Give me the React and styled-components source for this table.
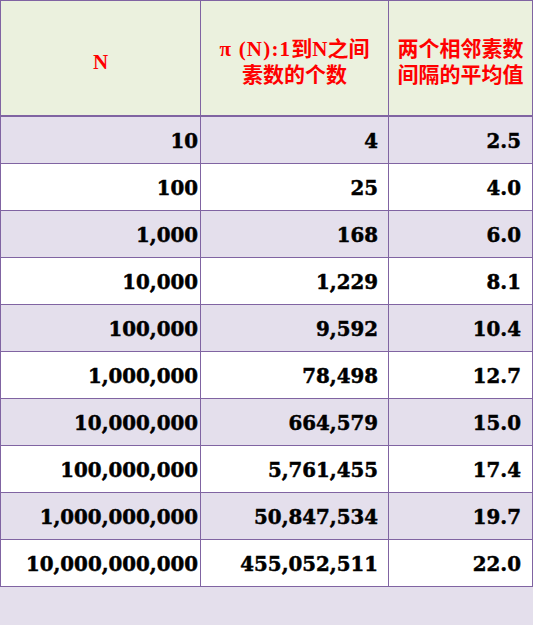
import React from "react";
import styled, { createGlobalStyle } from "styled-components";

const GlobalStyle = createGlobalStyle`
  html, body {
    margin: 0;
    padding: 0;
    background: #e4dfec;
  }
`;

const Grid = styled.div`
  display: grid;
  grid-template-columns: 200px 188px 144px;
  width: 532px;
  border-top: 1px solid #8064a2;
  border-left: 1px solid #8064a2;
  font-family: "Liberation Serif", "Noto Sans CJK SC", serif;
  font-weight: bold;
`;

const HeadCell = styled.div`
  height: 116px;
  box-sizing: border-box;
  padding-top: 8px;
  background: #ebf1de;
  border-right: 1px solid #8064a2;
  border-bottom: 2px solid #8064a2;
  display: flex;
  align-items: center;
  justify-content: center;
  text-align: center;
  color: #ff0000;
  font-size: 21px;
  line-height: 26px;
`;

const Spaced = styled.span`
  letter-spacing: ${(p) => p.$ls}px;
`;

const Cell = styled.div`
  height: 47px;
  box-sizing: border-box;
  background: ${(p) => (p.$odd ? "#e4dfec" : "#ffffff")};
  border-right: 1px solid #8064a2;
  border-bottom: 1px solid #8064a2;
  display: flex;
  align-items: center;
  justify-content: flex-end;
  padding-top: 2px;
  padding-right: ${(p) => p.$pad}px;
  color: #000;
  font-family: "DejaVu Serif", "Liberation Serif", serif;
  font-size: 19.8px;
  -webkit-text-stroke: 0.5px #000;
`;

const rows = [
  ["10", "4", "2.5"],
  ["100", "25", "4.0"],
  ["1,000", "168", "6.0"],
  ["10,000", "1,229", "8.1"],
  ["100,000", "9,592", "10.4"],
  ["1,000,000", "78,498", "12.7"],
  ["10,000,000", "664,579", "15.0"],
  ["100,000,000", "5,761,455", "17.4"],
  ["1,000,000,000", "50,847,534", "19.7"],
  ["10,000,000,000", "455,052,511", "22.0"],
];

const pads = [2, 10, 11];

const App = () => (
  <>
    <GlobalStyle />
    <Grid>
      <HeadCell>N</HeadCell>
      <HeadCell>
        <span>
          <Spaced $ls={1.2}>π (N):1</Spaced>到N之间
          <br />
          素数的个数
        </span>
      </HeadCell>
      <HeadCell>
        两个相邻素数
        <br />
        间隔的平均值
      </HeadCell>
      {rows.map((row, i) =>
        row.map((v, j) => (
          <Cell key={`${i}-${j}`} $odd={i % 2 === 0} $pad={pads[j]}>
            {v}
          </Cell>
        ))
      )}
    </Grid>
  </>
);

export default App;
